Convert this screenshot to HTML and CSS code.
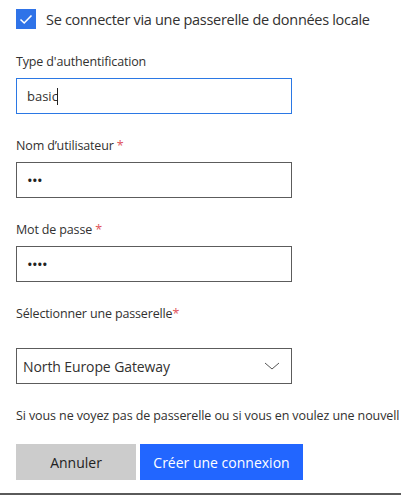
FILE: index.html
```html
<!DOCTYPE html>
<html lang="fr">
<head>
<meta charset="utf-8">
<link rel="stylesheet" href="styles.css">
</head>
<body>
<div class="page">
  <div class="check-row">
    <span class="checkbox">
      <svg viewBox="0 0 20 20" width="20" height="20"><path d="M4.5 10.5 L8.2 14 L15.5 6.5" fill="none" stroke="#fff" stroke-width="1.6"/></svg>
    </span>
    <span class="check-label">Se connecter via une passerelle de données locale</span>
  </div>

  <div class="field first">
    <div class="label">Type d'authentification</div>
    <div class="input focused"><span>basic</span><span class="caret"></span></div>
  </div>

  <div class="field">
    <div class="label">Nom d’utilisateur <span class="req">*</span></div>
    <div class="input"><span class="dots">•••</span></div>
  </div>

  <div class="field">
    <div class="label">Mot de passe <span class="req">*</span></div>
    <div class="input"><span class="dots">••••</span></div>
  </div>

  <div class="field gw">
    <div class="label">Sélectionner une passerelle<span class="req">*</span></div>
    <div class="select">
      <span>North Europe Gateway</span>
      <svg class="chev" viewBox="0 0 16 8" width="16" height="8"><path d="M1 1 L8 7 L15 1" fill="none" stroke="#555" stroke-width="1"/></svg>
    </div>
  </div>

  <div class="help"><span>Si vous ne voyez pas de passerelle ou si vous en voulez une nouvell</span></div>

  <div class="buttons">
    <button class="btn cancel">Annuler</button>
    <button class="btn primary">Créer une connexion</button>
  </div>
</div>
</body>
</html>
```

FILE: styles.css
```css
html, body {
  margin: 0;
  padding: 0;
  background: #fff;
}
body {
  width: 401px;
  height: 495px;
  overflow: hidden;
  font-family: "Open Sans", "Noto Sans", sans-serif;
  color: #323130;
  border-bottom: 2px solid #5a5a5a;
  box-sizing: border-box;
}
.page {
  padding: 9px 0 0 16px;
  white-space: nowrap;
}
.check-row {
  display: flex;
  align-items: center;
  gap: 10px;
  height: 20px;
}
.checkbox {
  width: 20px;
  height: 20px;
  background: #2f73e8;
  display: flex;
}
.check-label {
  font-size: 14.5px;
  letter-spacing: -0.3px;
  color: #323130;
}
.field {
  margin-top: 23px;
}
.field.first {
  margin-top: 24px;
}
.label {
  font-size: 12.5px;
  line-height: 17px;
  letter-spacing: -0.15px;
  color: #323130;
}
.req {
  color: #e0525b;
}
.input, .select {
  margin-top: 8px;
  width: 276px;
  height: 36px;
  box-sizing: border-box;
  border: 1.5px solid #5c5c5c;
  display: flex;
  align-items: center;
  padding-left: 10px;
  font-size: 13px;
}
.input.focused {
  border: 1.5px solid #2b78e4;
}
.caret {
  width: 1px;
  height: 17px;
  background: #222;
  margin-left: -1px;
}
.dots {
  font-size: 15px;
  letter-spacing: -0.6px;
  color: #222;
}
.gw .select {
  margin-top: 26px;
  padding-left: 6px;
  padding-right: 11px;
  justify-content: space-between;
  font-size: 14px;
  letter-spacing: -0.1px;
}
.chev {
  display: block;
}
.help {
  margin-top: 23px;
  margin-left: -16px;
  padding-left: 16px;
  width: 401px;
  box-sizing: border-box;
  overflow: hidden;
  font-size: 12.5px;
  line-height: 17px;
  letter-spacing: -0.1px;
  color: #323130;
}
.buttons {
  margin-top: 20px;
  display: flex;
  gap: 4px;
}
.btn {
  height: 36px;
  border: none;
  font-family: inherit;
  font-size: 14px;
  padding: 0;
}
.cancel {
  width: 120px;
  background: #cccccc;
  color: #222;
}
.primary {
  width: 163px;
  background: #2266ff;
  color: #fff;
}
```
